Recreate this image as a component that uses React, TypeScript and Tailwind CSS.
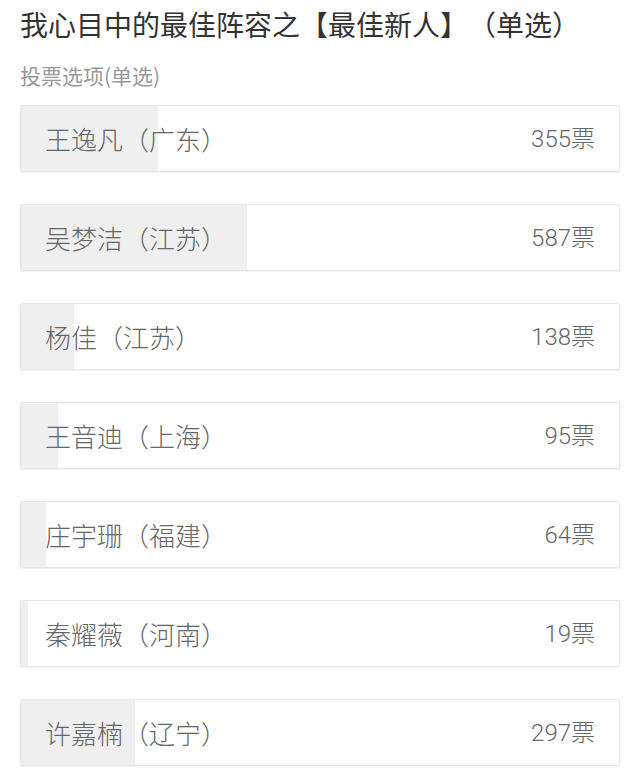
import React from 'react';

type Option = { name: string; votes: number };

const options: Option[] = [
  { name: '王逸凡（广东）', votes: 355 },
  { name: '吴梦洁（江苏）', votes: 587 },
  { name: '杨佳（江苏）', votes: 138 },
  { name: '王音迪（上海）', votes: 95 },
  { name: '庄宇珊（福建）', votes: 64 },
  { name: '秦耀薇（河南）', votes: 19 },
  { name: '许嘉楠（辽宁）', votes: 297 },
];

const total = options.reduce((s, o) => s + o.votes, 0);

function OptionRow({ option }: { option: Option }) {
  const pct = (option.votes / total) * 100;
  return (
    <div className="relative h-[67px] bg-white border border-[#e6e6e6] rounded-[2px] shadow-[0_1px_1px_rgba(0,0,0,0.06)] overflow-hidden">
      <div className="absolute left-0 top-0 bottom-0 bg-[#efefef]" style={{ width: `${pct}%` }} />
      <div className="relative h-full flex items-center justify-between pl-[24px] pr-[24px]">
        <span className="text-[26px] text-[#666] font-light">{option.name}</span>
        <span
          className="text-[24px] text-[#666] font-light"
          style={{ fontFamily: 'Roboto, "Noto Sans CJK SC", sans-serif' }}
        >
          {option.votes}票
        </span>
      </div>
    </div>
  );
}

export default function App() {
  return (
    <div
      className="w-[640px] h-[772px] bg-white overflow-hidden px-[20px] [text-spacing-trim:space-all]"
      style={{ fontFamily: '"Noto Sans CJK SC", "Noto Sans", sans-serif' }}
    >
      <h1 className="pt-[2px] text-[28px] leading-[44px] text-[#333] font-normal">
        我心目中的最佳阵容之【最佳新人】（单选）
      </h1>
      <p className="mt-[15px] text-[21px] leading-[28px] text-[#999]">投票选项(单选)</p>
      <div className="mt-[16px] flex flex-col gap-[32px]">
        {options.map((o) => (
          <OptionRow key={o.name} option={o} />
        ))}
      </div>
    </div>
  );
}
